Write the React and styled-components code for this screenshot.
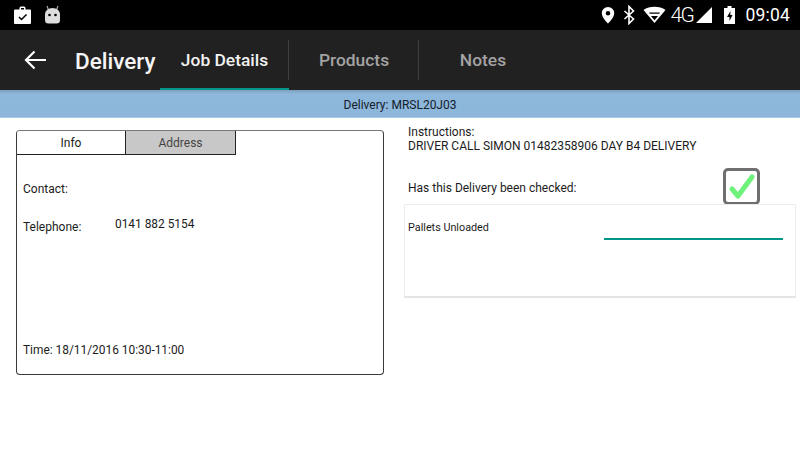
import React from "react";
import styled, { createGlobalStyle } from "styled-components";

const Global = createGlobalStyle`
  html, body { margin: 0; padding: 0; background: #fff; }
  body { font-family: Roboto, "Liberation Sans", sans-serif; overflow: hidden; }
  * { box-sizing: border-box; }
`;
const Page = styled.div`width: 800px; height: 450px; display: flex; flex-direction: column; background: #fff; color: #1c1c1c;`;
const StatusBar = styled.div`height: 30px; background: #000; display: flex; align-items: center; padding: 0 10px 0 13px; color: #fff;`;
const StatusLeft = styled.div`display: flex; align-items: center; gap: 12px;`;
const StatusRight = styled.div`margin-left: auto; display: flex; align-items: center;`;
const FourG = styled.span`font-size: 21px; letter-spacing: -1.5px; margin: 0 2px 0 4px; font-weight: 300; line-height: 30px;`;
const Clock = styled.span`font-size: 17.5px; margin-left: 9px; line-height: 30px; letter-spacing: .2px;`;
const AppBar = styled.div`height: 60px; background: #212121; display: flex; align-items: stretch; position: relative; z-index: 1;`;
const Back = styled.div`width: 75px; display: flex; align-items: center; padding-left: 24px;`;
const Title = styled.div`width: 85px; font-size: 22.5px; font-weight: 500; color: #f5f5f5; line-height: 62px; white-space: nowrap;`;
const Tabs = styled.div`display: flex;`;
const Tab = styled.div`
  width: ${p => p.$w}px; display: flex; align-items: center; justify-content: center;
  font-size: 17.4px; font-weight: 500; color: ${p => p.$active ? "#f2f2f2" : "#a3a3a3"};
  border-bottom: 2px solid ${p => p.$active ? "#009688" : "transparent"};
  position: relative; padding-top: 2px;
  &::after { content: ""; display: ${p => p.$sep ? "block" : "none"}; position: absolute; right: 0; top: 10px; height: 40px; width: 1px; background: #3f3f3f; }
`;
const InfoBar = styled.div`height: 28px; background: linear-gradient(#7d9fbd 0, #8db7db 4px, #8cb6da 100%); text-align: center; font-size: 12px; line-height: 30px; color: #14202b; border-bottom: 1px solid #a9cbe8;`;
const Content = styled.div`display: grid; grid-template-columns: 368px 392px; column-gap: 24px; padding: 12px 0 0 16px;`;
const Card = styled.div`height: 245px; border: 1px solid #3a3a3a; border-top-color: #777; border-radius: 4px; display: flex; flex-direction: column; font-size: 12px;`;
const CardTabs = styled.div`display: flex; height: 24px;`;
const CardTab = styled.div`
  width: ${p => p.$on ? "109px" : "110px"}; display: flex; align-items: center; justify-content: center;
  border-bottom: 1px solid #222; border-right: 1px solid #222; padding-top: 1px;
  background: ${p => p.$on ? "#fff" : "#c8c8c8"}; color: ${p => p.$on ? "#222" : "#444"};
  border-top-left-radius: ${p => p.$on ? "3px" : "0"};
`;
const CardBody = styled.div`flex: 1; display: flex; flex-direction: column; padding: 0 6px;`;
const Row = styled.div`display: flex; margin-top: ${p => p.$mt}px; line-height: 14px;`;
const Label = styled.div`width: 92px; position: relative; top: ${p => p.$drop || 0}px;`;
const Value = styled.div`font-size: 11.9px;`;
const Bottom = styled.div`margin-top: auto; margin-bottom: 17px; line-height: 14px; font-size: 11.9px;`;
const Side = styled.div`display: flex; flex-direction: column; font-size: 12px;`;
const Instr = styled.div`line-height: 14px; margin-top: -5px;`;
const Checked = styled.div`display: flex; align-items: center; height: 38px; margin-top: 15px; padding-top: 1px; position: relative;`;
const Box = styled.div`
  position: absolute; left: 315px; top: 0; width: 37px; height: 37px;
  border: 3px solid #6f6f6f; border-radius: 5px; background: #fff;
  display: flex; align-items: center; justify-content: center;
`;
const Panel = styled.div`
  margin: -2px 0 0 -4px; width: 392px; height: 94px; background: #fff;
  border: 1px solid #ececec; border-bottom: 2px solid #e4e4e4;
  display: flex; padding: 16px 13px 0 3px; font-size: 10.8px; position: relative;
`;
const PanelLabel = styled.div`line-height: 14px;`;
const Field = styled.div`position: absolute; left: 199px; top: 33px; width: 179px; height: 2px; background: #009688;`;

export default function App() {
  return (
    <Page>
      <Global />
      <StatusBar>
        <StatusLeft>
          <svg width="19" height="19" viewBox="0 0 19 19">
            <path fill="#fff" d="M6.500 3.500V2a1.500 1.500 0 0 1 1.500-1.500h3A1.500 1.500 0 0 1 12.500 2v1.500H17a1 1 0 0 1 1 1V17a1 1 0 0 1-1 1H2a1 1 0 0 1-1-1V4.500a1 1 0 0 1 1-1zM8 2v1.500h3V2z" fillRule="evenodd" />
            <path fill="none" stroke="#000" strokeWidth="1.500" d="M6 11l2.500 2.500L13.500 8.500" />
          </svg>
          <svg width="17" height="20" viewBox="0 0 17 20">
            <path fill="none" stroke="#aaa" strokeWidth="1.200" d="M3 1l1.500 4M14 1l-1.500 4" />
            <path fill="#ddd" d="M1 9a7.500 6 0 0 1 15 0v6a3.500 3.500 0 0 1-3.500 3.500h-8A3.500 3.500 0 0 1 1 15z" />
            <circle cx="5.500" cy="10" r="1.300" fill="#000" />
            <circle cx="11.500" cy="10" r="1.300" fill="#000" />
          </svg>
        </StatusLeft>
        <StatusRight>
          <svg width="16" height="20" viewBox="0 0 16 20" style={{ marginRight: 7 }}>
            <path fill="#fff" fillRule="evenodd" d="M8 2a6.200 6.200 0 0 1 6.200 6.200C14.200 12.500 8 18.500 8 18.500S1.800 12.500 1.800 8.200A6.200 6.200 0 0 1 8 2zm0 4a2.300 2.300 0 1 0 0 4.600A2.300 2.300 0 0 0 8 6z" />
          </svg>
          <svg width="13" height="20" viewBox="0 0 13 20" style={{ marginRight: 7 }}>
            <path fill="none" stroke="#fff" strokeWidth="1.600" d="M1.500 6l9 8-4.500 4.500v-17L10.500 6l-9 8" />
          </svg>
          <svg width="23" height="18" viewBox="0 0 23 18">
            <path fill="#fff" d="M0.500 4C3.500 1.800 7.300.800 11.500.800S19.500 1.800 22.500 4L11.500 17z" />
            <path fill="#000" d="M6 6.500h11l-.9 1.200H6.900zM8 10h7l-3.500 4.200z" />
          </svg>
          <FourG>4G</FourG>
          <svg width="18" height="18" viewBox="0 0 18 18">
            <path fill="#fff" d="M17 1v16H1z" />
          </svg>
          <svg width="13" height="20" viewBox="0 0 13 20" style={{ marginLeft: 10 }}>
            <path fill="#fff" fillRule="evenodd" d="M4.500 1h4v2h3.500v16H1V3h3.500zM7.500 6L4 12h2.500v4l3-6H7.300z" />
          </svg>
          <Clock>09:04</Clock>
        </StatusRight>
      </StatusBar>
      <AppBar>
        <Back>
          <svg width="22" height="20" viewBox="0 0 22 20">
            <path fill="none" stroke="#fff" strokeWidth="2.200" d="M22 10H2M10.500 1.500L2 10l8.500 8.500" />
          </svg>
        </Back>
        <Title>Delivery</Title>
        <Tabs>
          <Tab $w={129} $active $sep>Job Details</Tab>
          <Tab $w={130} $sep>Products</Tab>
          <Tab $w={128}>Notes</Tab>
        </Tabs>
      </AppBar>
      <InfoBar>Delivery: MRSL20J03</InfoBar>
      <Content>
        <Card>
          <CardTabs>
            <CardTab $on>Info</CardTab>
            <CardTab>Address</CardTab>
          </CardTabs>
          <CardBody>
            <Row $mt={27}><Label>Contact:</Label></Row>
            <Row $mt={21}><Label $drop={3}>Telephone:</Label><Value>0141 882 5154</Value></Row>
            <Bottom>Time: 18/11/2016 10:30-11:00</Bottom>
          </CardBody>
        </Card>
        <Side>
          <Instr>Instructions:<br />DRIVER CALL SIMON 01482358906 DAY B4 DELIVERY</Instr>
          <Checked>
            <span>Has this Delivery been checked:</span>
            <Box>
              <svg width="28" height="28" viewBox="0 0 28 28">
                <path fill="none" stroke="#6ff27c" strokeWidth="5" strokeLinecap="round" strokeLinejoin="round" d="M4 16l6 7L24 4" />
              </svg>
            </Box>
          </Checked>
          <Panel>
            <PanelLabel>Pallets Unloaded</PanelLabel>
            <Field />
          </Panel>
        </Side>
      </Content>
    </Page>
  );
}
